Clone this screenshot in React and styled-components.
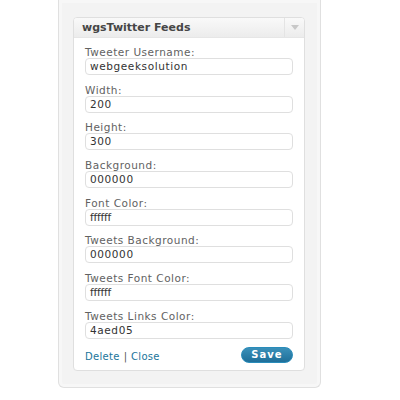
import React from "react";
import styled, { createGlobalStyle } from "styled-components";

const Global = createGlobalStyle`
  html, body { margin: 0; padding: 0; background: #ffffff; }
  body { font-family: "DejaVu Sans", Verdana, sans-serif; }
`;

const Page = styled.div`
  width: 400px;
  height: 400px;
  padding-left: 58px;
  box-sizing: border-box;
`;

const Sidebar = styled.div`
  width: 263px;
  box-sizing: border-box;
  background: #f3f3f3;
  border: 1px solid #e0e0e0;
  border-top: none;
  border-radius: 0 0 6px 6px;
  padding: 17px 15px 16px 14px;
  box-shadow: inset 0 0 0 3px #f7f7f7;
`;

const Widget = styled.div`
  width: 232px;
  box-sizing: border-box;
  background: #ffffff;
  border: 1px solid #dfdfdf;
  border-radius: 4px;
  overflow: hidden;
`;

const Header = styled.div`
  height: 19px;
  display: flex;
  align-items: stretch;
  background: linear-gradient(#f9f9f9, #ececec);
  border-bottom: 1px solid #e6e6e6;
`;

const Title = styled.h3`
  flex: 1;
  margin: 0;
  padding-left: 8px;
  font-size: 11px;
  font-weight: bold;
  line-height: 19px;
  color: #464646;
`;

const Toggle = styled.div`
  width: 19px;
  border-left: 1px solid #e4e4e4;
  display: flex;
  align-items: center;
  justify-content: center;
`;

const Arrow = styled.span`
  width: 0;
  height: 0;
  border-left: 4px solid transparent;
  border-right: 4px solid transparent;
  border-top: 5px solid #c8c8c8;
`;

const Body = styled.div`
  padding: 8px 11px 7px 11px;
  display: flex;
  flex-direction: column;
  gap: 8.7px;
`;

const Field = styled.div`
  display: flex;
  flex-direction: column;
`;

const Label = styled.label`
  font-size: 10.5px;
  letter-spacing: 0.5px;
  line-height: 12px;
  color: #626262;
`;

const Input = styled.div`
  width: 208px;
  height: 17px;
  box-sizing: border-box;
  border: 1px solid #dfdfdf;
  border-radius: 4px;
  background: #ffffff;
  padding-left: 4px;
  font-size: 10.5px;
  line-height: 15px;
  color: #333333;
  letter-spacing: ${(p) => (p.$tight ? "-0.2px" : "0.6px")};
`;

const Footer = styled.div`
  display: flex;
  align-items: center;
  justify-content: space-between;
  margin-top: -0.7px;
`;

const Links = styled.div`
  font-size: 10px;
  color: #555;
  padding-top: 3px;
  display: flex;
  gap: 4px;
`;

const Link = styled.a`
  color: #21759b;
  text-decoration: none;
  letter-spacing: 0.3px;
`;

const SaveButton = styled.button`
  width: 52px;
  height: 16px;
  border: 1px solid #298cba;
  border-radius: 9px;
  background: linear-gradient(#3a90b9, #1f6f99);
  color: #ffffff;
  font-family: "DejaVu Sans", Verdana, sans-serif;
  font-size: 10px;
  font-weight: bold;
  letter-spacing: 1px;
  padding: 0;
  line-height: 14px;
`;

const fields = [
  ["Tweeter Username:", "webgeeksolution"],
  ["Width:", "200"],
  ["Height:", "300"],
  ["Background:", "000000"],
  ["Font Color:", "ffffff", true],
  ["Tweets Background:", "000000"],
  ["Tweets Font Color:", "ffffff", true],
  ["Tweets Links Color:", "4aed05"],
];

export default function App() {
  return (
    <Page>
      <Global />
      <Sidebar>
        <Widget>
          <Header>
            <Title>wgsTwitter Feeds</Title>
            <Toggle>
              <Arrow />
            </Toggle>
          </Header>
          <Body>
            {fields.map(([label, value, tight]) => (
              <Field key={label}>
                <Label>{label}</Label>
                <Input $tight={tight}>{value}</Input>
              </Field>
            ))}
            <Footer>
              <Links>
                <Link href="#">Delete</Link>
                <span>|</span>
                <Link href="#">Close</Link>
              </Links>
              <SaveButton>Save</SaveButton>
            </Footer>
          </Body>
        </Widget>
      </Sidebar>
    </Page>
  );
}
